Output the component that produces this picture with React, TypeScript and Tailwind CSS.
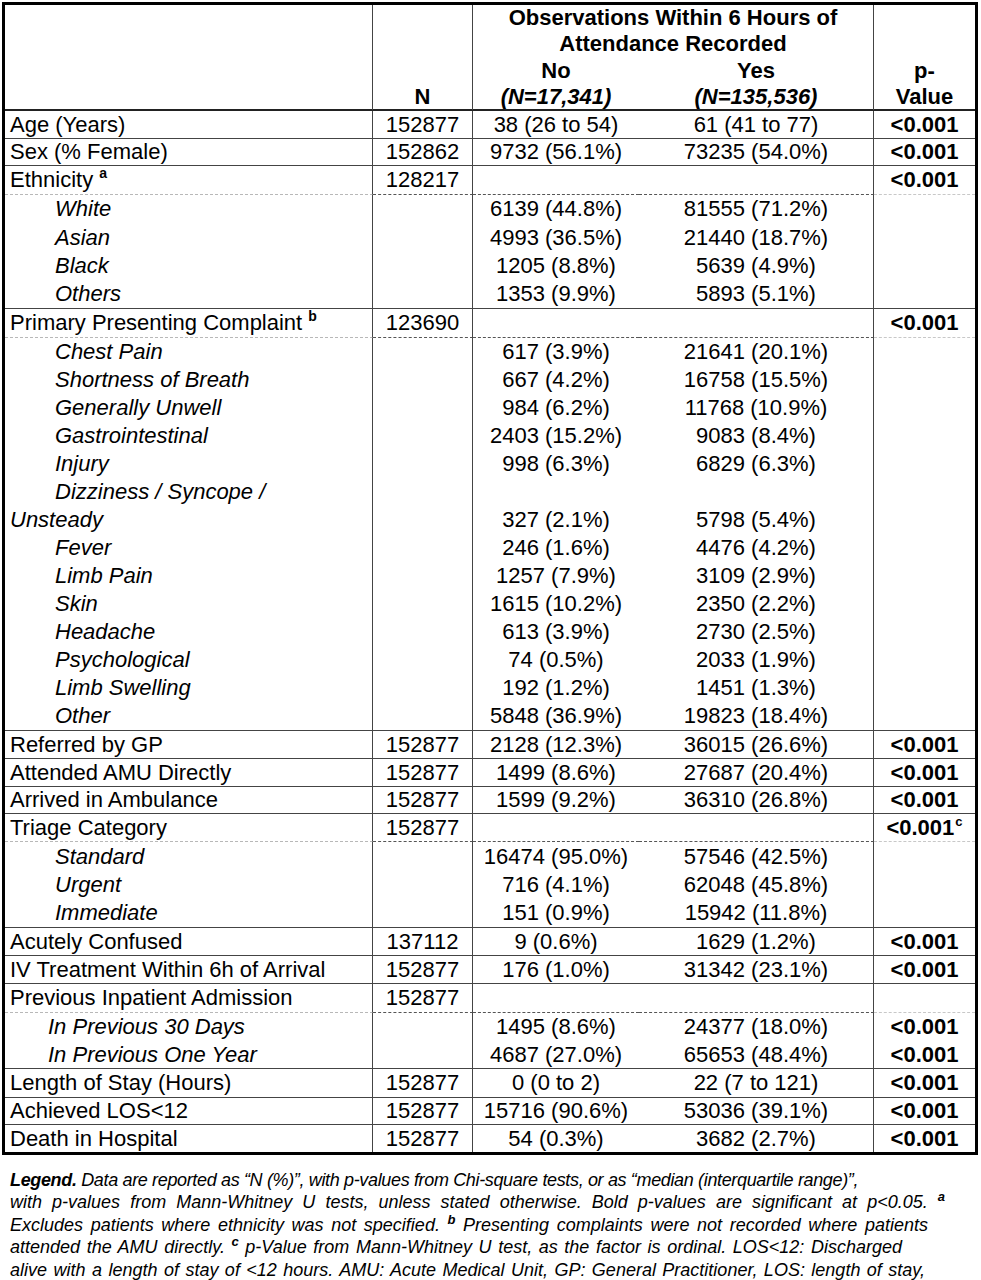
import React from "react";

type Border = "solid" | "dashed" | "none";
type Row = {
  l: string;
  sup?: string;
  n?: string;
  no?: string;
  yes?: string;
  p?: string;
  psup?: string;
  h: 27 | 28 | 29;
  b: Border;
  indent?: "sub" | "sub2" | "none";
};

const H: Record<number, string> = {
  27: "h-[27px]",
  28: "h-[28px]",
  29: "h-[29px]",
};

const rows: Row[] = [
  { l: "Age (Years)", n: "152877", no: "38 (26 to 54)", yes: "61 (41 to 77)", p: "<0.001", h: 28, b: "solid" },
  { l: "Sex (% Female)", n: "152862", no: "9732 (56.1%)", yes: "73235 (54.0%)", p: "<0.001", h: 27, b: "solid" },
  { l: "Ethnicity", sup: "a", n: "128217", p: "<0.001", h: 29, b: "dashed" },
  { l: "White", indent: "sub", no: "6139 (44.8%)", yes: "81555 (71.2%)", h: 28, b: "none" },
  { l: "Asian", indent: "sub", no: "4993 (36.5%)", yes: "21440 (18.7%)", h: 29, b: "none" },
  { l: "Black", indent: "sub", no: "1205 (8.8%)", yes: "5639 (4.9%)", h: 28, b: "none" },
  { l: "Others", indent: "sub", no: "1353 (9.9%)", yes: "5893 (5.1%)", h: 29, b: "solid" },
  { l: "Primary Presenting Complaint", sup: "b", n: "123690", p: "<0.001", h: 29, b: "dashed" },
  { l: "Chest Pain", indent: "sub", no: "617 (3.9%)", yes: "21641 (20.1%)", h: 28, b: "none" },
  { l: "Shortness of Breath", indent: "sub", no: "667 (4.2%)", yes: "16758 (15.5%)", h: 28, b: "none" },
  { l: "Generally Unwell", indent: "sub", no: "984 (6.2%)", yes: "11768 (10.9%)", h: 28, b: "none" },
  { l: "Gastrointestinal", indent: "sub", no: "2403 (15.2%)", yes: "9083 (8.4%)", h: 28, b: "none" },
  { l: "Injury", indent: "sub", no: "998 (6.3%)", yes: "6829 (6.3%)", h: 28, b: "none" },
  { l: "Dizziness / Syncope /", indent: "sub", h: 28, b: "none" },
  { l: "Unsteady", indent: "none", no: "327 (2.1%)", yes: "5798 (5.4%)", h: 28, b: "none" },
  { l: "Fever", indent: "sub", no: "246 (1.6%)", yes: "4476 (4.2%)", h: 28, b: "none" },
  { l: "Limb Pain", indent: "sub", no: "1257 (7.9%)", yes: "3109 (2.9%)", h: 28, b: "none" },
  { l: "Skin", indent: "sub", no: "1615 (10.2%)", yes: "2350 (2.2%)", h: 28, b: "none" },
  { l: "Headache", indent: "sub", no: "613 (3.9%)", yes: "2730 (2.5%)", h: 28, b: "none" },
  { l: "Psychological", indent: "sub", no: "74 (0.5%)", yes: "2033 (1.9%)", h: 28, b: "none" },
  { l: "Limb Swelling", indent: "sub", no: "192 (1.2%)", yes: "1451 (1.3%)", h: 28, b: "none" },
  { l: "Other", indent: "sub", no: "5848 (36.9%)", yes: "19823 (18.4%)", h: 29, b: "solid" },
  { l: "Referred by GP", n: "152877", no: "2128 (12.3%)", yes: "36015 (26.6%)", p: "<0.001", h: 28, b: "solid" },
  { l: "Attended AMU Directly", n: "152877", no: "1499 (8.6%)", yes: "27687 (20.4%)", p: "<0.001", h: 28, b: "solid" },
  { l: "Arrived in Ambulance", n: "152877", no: "1599 (9.2%)", yes: "36310 (26.8%)", p: "<0.001", h: 27, b: "solid" },
  { l: "Triage Category", n: "152877", p: "<0.001", psup: "c", h: 28, b: "dashed" },
  { l: "Standard", indent: "sub", no: "16474 (95.0%)", yes: "57546 (42.5%)", h: 29, b: "none" },
  { l: "Urgent", indent: "sub", no: "716 (4.1%)", yes: "62048 (45.8%)", h: 28, b: "none" },
  { l: "Immediate", indent: "sub", no: "151 (0.9%)", yes: "15942 (11.8%)", h: 29, b: "solid" },
  { l: "Acutely Confused", n: "137112", no: "9 (0.6%)", yes: "1629 (1.2%)", p: "<0.001", h: 28, b: "solid" },
  { l: "IV Treatment Within 6h of Arrival", n: "152877", no: "176 (1.0%)", yes: "31342 (23.1%)", p: "<0.001", h: 28, b: "solid" },
  { l: "Previous Inpatient Admission", n: "152877", h: 29, b: "dashed" },
  { l: "In Previous 30 Days", indent: "sub2", no: "1495 (8.6%)", yes: "24377 (18.0%)", p: "<0.001", h: 28, b: "none" },
  { l: "In Previous One Year", indent: "sub2", no: "4687 (27.0%)", yes: "65653 (48.4%)", p: "<0.001", h: 28, b: "solid" },
  { l: "Length of Stay (Hours)", n: "152877", no: "0 (0 to 2)", yes: "22 (7 to 121)", p: "<0.001", h: 29, b: "solid" },
  { l: "Achieved LOS<12", n: "152877", no: "15716 (90.6%)", yes: "53036 (39.1%)", p: "<0.001", h: 27, b: "solid" },
  { l: "Death in Hospital", n: "152877", no: "54 (0.3%)", yes: "3682 (2.7%)", p: "<0.001", h: 27, b: "none" },
];

const GRID = "grid grid-cols-[368px_100px_166px_235px_101px]";

function DataRow({ r }: { r: Row }) {
  const dashed = r.b === "dashed";
  const dLight = dashed ? "border-b border-b-[#b8b8b8] [border-bottom-style:dashed]" : "";
  const dDark = dashed ? "border-b border-b-[#555] [border-bottom-style:dashed]" : "";
  const dLighter = dashed ? "border-b border-b-[#c8c8c8] [border-bottom-style:dashed]" : "";
  const rowBorder = r.b === "solid" ? "border-b border-[#444]" : "";
  const pad =
    r.indent === "sub"
      ? "pl-[50px] italic"
      : r.indent === "sub2"
      ? "pl-[43px] italic"
      : r.indent === "none"
      ? "pl-[5px] italic"
      : "pl-[5px]";
  return (
    <div className={`${GRID} ${H[r.h]} ${rowBorder}`}>
      <div className={`border-r border-r-[#444] flex items-center whitespace-nowrap ${pad} ${dLight}`}>
        <span>
          {r.l}
          {r.sup && (
            <span className="inline-block text-[14px] font-bold leading-none ml-[6px] align-baseline relative top-[-9px]">
              {r.sup}
            </span>
          )}
        </span>
      </div>
      <div className={`border-r border-r-[#444] flex items-center justify-center ${dDark}`}>{r.n}</div>
      <div className={`flex items-center justify-center whitespace-nowrap ${dDark}`}>{r.no}</div>
      <div className={`border-r border-r-[#444] flex items-center justify-center whitespace-nowrap ${dDark}`}>{r.yes}</div>
      <div className={`flex items-center justify-center font-bold ${dLighter}`}>
        <span className="whitespace-nowrap">
          {r.p}
          {r.psup && (
            <span className="inline-block text-[13px] font-bold leading-none ml-[1px] align-baseline relative top-[-9px]">
              {r.psup}
            </span>
          )}
        </span>
      </div>
    </div>
  );
}

function LSup({ c }: { c: string }) {
  return <span className="inline-block font-bold text-[13px] leading-none align-baseline relative top-[-7px]">{c}</span>;
}

export default function App() {
  return (
    <div className="w-[981px] min-h-[1280px] bg-white text-black font-['Liberation_Sans',Arial,sans-serif] overflow-hidden">
      <div className="ml-[2px] mt-[2px] w-[976px] border-[3px] border-black text-[22px] leading-none">
        {/* Header */}
        <div className={`${GRID} h-[106px] border-b-2 border-b-[#222] font-bold leading-[26.3px]`}>
          <div className="border-r border-r-[#444]" />
          <div className="border-r border-r-[#444] flex flex-col justify-end items-center">
            <div>N</div>
          </div>
          <div className="col-span-2 border-r border-r-[#444] flex flex-col justify-end">
            <div className="text-center">Observations Within 6 Hours of</div>
            <div className="text-center">Attendance Recorded</div>
            <div className="grid grid-cols-[166px_234px]">
              <div className="text-center">No</div>
              <div className="text-center">Yes</div>
            </div>
            <div className="grid grid-cols-[166px_234px] italic">
              <div className="text-center">(N=17,341)</div>
              <div className="text-center">(N=135,536)</div>
            </div>
          </div>
          <div className="flex flex-col justify-end items-center">
            <div>p-</div>
            <div>Value</div>
          </div>
        </div>
        {rows.map((r, i) => (
          <DataRow key={i} r={r} />
        ))}
      </div>
      <div className="mt-[14px] pl-[10px] text-[18px] leading-[22.4px] italic">
        <div className="whitespace-nowrap tracking-[-0.35px]">
          <b>Legend.</b> Data are reported as “N (%)”, with p-values from Chi-square tests, or as “median (interquartile range)”,
        </div>
        <div className="w-[935px] [text-align-last:justify]">
          with p-values from Mann-Whitney U tests, unless stated otherwise. Bold p-values are significant at p&lt;0.05. <LSup c="a" />
        </div>
        <div className="w-[918px] [text-align-last:justify]">
          Excludes patients where ethnicity was not specified. <LSup c="b" /> Presenting complaints were not recorded where patients
        </div>
        <div className="w-[892px] [text-align-last:justify]">
          attended the AMU directly. <LSup c="c" /> p-Value from Mann-Whitney U test, as the factor is ordinal. LOS&lt;12: Discharged
        </div>
        <div className="w-[915px] [text-align-last:justify]">
          alive with a length of stay of &lt;12 hours. AMU: Acute Medical Unit, GP: General Practitioner, LOS: length of stay,
        </div>
      </div>
    </div>
  );
}
